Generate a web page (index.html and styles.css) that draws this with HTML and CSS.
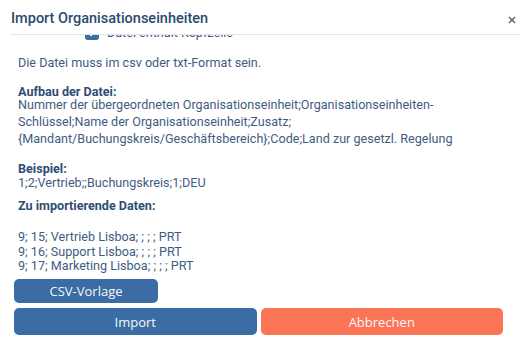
FILE: index.html
```html
<!DOCTYPE html>
<html lang="de">
<head>
<meta charset="utf-8">
<title>Import Organisationseinheiten</title>
<link rel="stylesheet" href="styles.css">
</head>
<body>
<div class="modal">
  <header class="hd">
    <h1 class="title">Import Organisationseinheiten</h1>
    <button class="close" aria-label="Schließen">
      <svg width="8" height="8" viewBox="0 0 8 8"><path d="M1 1L7 7M7 1L1 7" stroke="#5a5a5a" stroke-width="1.3" fill="none"/></svg>
    </button>
  </header>
  <div class="scroll">
    <div class="content">
      <label class="chk">
        <span class="box"><svg width="10" height="10" viewBox="0 0 10 10"><path d="M2 5.2L4.2 7.3L8.2 2.8" stroke="#fff" stroke-width="1.8" fill="none"/></svg></span>
        <span>Datei enthält Kopfzeile</span>
      </label>
      <p class="info">Die Datei muss im csv oder txt-Format sein.</p>
      <h2 class="lbl lbl-tight">Aufbau der Datei:</h2>
      <p class="struct">Nummer der übergeordneten Organisationseinheit;Organisationseinheiten-<br>Schlüssel;Name der Organisationseinheit;Zusatz;<br>{Mandant/Buchungskreis/Geschäftsbereich};Code;Land zur gesetzl. Regelung</p>
      <h2 class="lbl lbl-ex">Beispiel:</h2>
      <p class="line">1;2;Vertrieb;;Buchungskreis;1;DEU</p>
      <h2 class="lbl lbl-data">Zu importierende Daten:</h2>
      <p class="data">9; 15; Vertrieb Lisboa; ; ; ; PRT<br>9; 16; Support Lisboa; ; ; ; PRT<br>9; 17; Marketing Lisboa; ; ; ; PRT</p>
      <button class="btn btn-blue btn-csv">CSV-Vorlage</button>
    </div>
  </div>
  <footer class="ft">
    <button class="btn btn-blue btn-wide">Import</button>
    <button class="btn btn-orange btn-wide">Abbrechen</button>
  </footer>
</div>
</body>
</html>
```
FILE: styles.css
```css
* { box-sizing: border-box; }
html, body { margin: 0; padding: 0; background: #fff; }
body { font-family: Roboto, "Liberation Sans", sans-serif; color: #3f5c82; }

.modal { width: 520px; height: 344px; display: flex; flex-direction: column; overflow: hidden; }

.hd {
  height: 35px;
  margin-left: 10px;
  padding: 0 4px 0 1px;
  border-bottom: 1px solid #e3e5e8;
  display: flex;
  align-items: center;
  justify-content: space-between;
  flex: none;
}
.title { margin: 0; font-size: 14.5px; font-weight: 500; color: #2b4a71; padding-top: 3px; }
.close { border: 0; background: none; padding: 0; width: 8px; height: 8px; display: flex; margin-top: 6px; }

.scroll { height: 273px; overflow: hidden; flex: none; padding: 0 17px 0 14px; }
.content { margin-top: -9px; }

.chk { display: flex; align-items: center; gap: 8px; height: 14px; margin-left: 71px; font-size: 12.6px; line-height: 14px; }
.box { width: 14px; height: 14px; border-radius: 3px; background: #3b6ca4; display: flex; align-items: center; justify-content: center; }

p, h2 { margin: 0; padding-left: 4px; }
.info { font-size: 12.6px; line-height: 16px; margin-top: 15px; }
.lbl { font-size: 12.6px; font-weight: 700; color: #2e4d74; line-height: 14px; }
.lbl-tight { margin-top: 14px; line-height: 10px; margin-bottom: 0; padding-top: 2px; }
.struct { font-size: 12.6px; line-height: 16.8px; }
.lbl-ex { margin-top: 15px; }
.line { font-size: 12.6px; line-height: 14px; }
.lbl-data { margin-top: 9px; }
.data { font-size: 12.6px; line-height: 14.5px; margin-top: 16.75px; }

.btn {
  font-family: "Open Sans", "Liberation Sans", sans-serif;
  font-size: 13px;
  font-weight: 400;
  color: #f6f8fb;
  border: 0;
  border-radius: 5px;
  padding: 0;
  display: flex;
  align-items: center;
  justify-content: center;
}
.btn-blue { background: #3b6ca4; }
.btn-orange { background: #fc7456; }
.btn-csv { width: 144px; height: 24px; margin-top: 5px; }

.ft { display: flex; gap: 4px; padding: 0 17px 0 14px; flex: none; }
.btn-wide { flex: 1; height: 27px; }
```
